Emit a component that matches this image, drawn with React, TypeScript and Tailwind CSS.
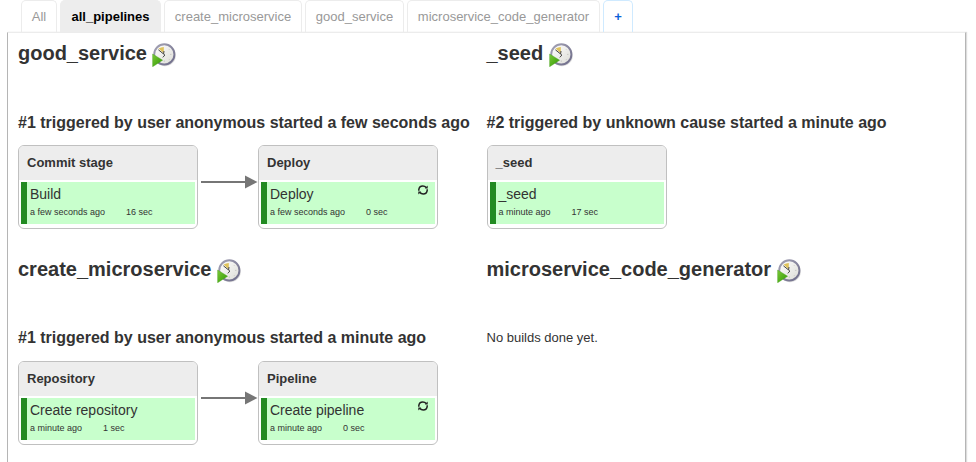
import React from "react";

type Task = { stage: string; name: string; when: string; took: string; rerun?: boolean };
type Pipeline = { title: string; run?: string; stages: Task[] };

const rows: Pipeline[][] = [
  [
    {
      title: "good_service",
      run: "#1 triggered by user anonymous started a few seconds ago",
      stages: [
        { stage: "Commit stage", name: "Build", when: "a few seconds ago", took: "16 sec" },
        { stage: "Deploy", name: "Deploy", when: "a few seconds ago", took: "0 sec", rerun: true },
      ],
    },
    {
      title: "_seed",
      run: "#2 triggered by unknown cause started a minute ago",
      stages: [{ stage: "_seed", name: "_seed", when: "a minute ago", took: "17 sec" }],
    },
  ],
  [
    {
      title: "create_microservice",
      run: "#1 triggered by user anonymous started a minute ago",
      stages: [
        { stage: "Repository", name: "Create repository", when: "a minute ago", took: "1 sec" },
        { stage: "Pipeline", name: "Create pipeline", when: "a minute ago", took: "0 sec", rerun: true },
      ],
    },
    { title: "microservice_code_generator", stages: [] },
  ],
];

const tabs = [
  { label: "All", width: "w-9" },
  { label: "all_pipelines", width: "w-[101px]", active: true },
  { label: "create_microservice", width: "w-[138px]" },
  { label: "good_service", width: "w-[99px]" },
  { label: "microservice_code_generator", width: "w-[193px]" },
  { label: "+", width: "w-[30px]", add: true },
];

function ClockIcon() {
  return (
    <svg className="mt-px size-6 shrink-0" viewBox="0 0 24 24">
      <defs>
        <linearGradient id="rim" x1="0" y1="0" x2="1" y2="1">
          <stop offset="0" stopColor="#a5a4b6" />
          <stop offset="1" stopColor="#6c6a88" />
        </linearGradient>
        <linearGradient id="face" x1="0" y1="0" x2="1" y2="1">
          <stop offset="0" stopColor="#ffffff" />
          <stop offset="1" stopColor="#dcdcd6" />
        </linearGradient>
        <linearGradient id="play" x1="0" y1="0" x2="1" y2="1">
          <stop offset="0" stopColor="#7cc83a" />
          <stop offset="1" stopColor="#2f9900" />
        </linearGradient>
      </defs>
      <circle cx="13" cy="12.4" r="10.8" fill="#000" opacity=".14" />
      <circle cx="12.3" cy="11.4" r="10.1" fill="url(#face)" stroke="url(#rim)" strokeWidth="1.9" />
      <path d="M11.8 10.4 6.6 5.6Q9 4 11.8 4Z" fill="#dfc35c" />
      <path d="M6.4 6.8 11.6 11M12 8 11.6 11 12.9 12 10.8 14.4" fill="none" stroke="#484848" strokeWidth="1" />
      <path d="M19.4 11.4h-1.2M17.4 6.3l-.6.6M17.4 16.6l-.6-.6M12.3 18.7v-1.2" stroke="#b3b3ae" strokeWidth=".7" />
      <path d="M.6 11V23.8L10.6 17.2Z" fill="url(#play)" stroke="#45a01c" strokeWidth=".4" />
    </svg>
  );
}

function RerunIcon() {
  return (
    <svg className="ml-auto mr-[6px] mt-[2px] h-3 w-3 shrink-0" viewBox="0 0 12 12" fill="none">
      <path d="M1.8 6.7V5.6Q2.2 2 5.8 2 7.8 2 9.4 3.6M10.2 5.3V6.4Q9.8 10 6.2 10 4.2 10 2.6 8.4" stroke="#222" strokeWidth="1.5" />
      <path d="M7.9 4.4H10.7V1.6ZM4.1 7.6H1.3V10.4Z" fill="#222" />
    </svg>
  );
}

function Arrow() {
  return (
    <svg className="mt-[30px] h-[14px] w-[60px] shrink-0" viewBox="0 0 60 14">
      <path d="M3 6H48V8H3Z" fill="#767676" />
      <path d="M47 .5 59.5 7 47 13.5Z" fill="#767676" />
    </svg>
  );
}

function StageCard({ task }: { task: Task }) {
  return (
    <div className="h-[84px] w-[180px] shrink-0 overflow-hidden rounded-[6px] border border-[#c0c0c0] bg-white">
      <div className="h-[34px] bg-[#ededed] pl-2 text-[13px] leading-[33px] font-bold">{task.stage}</div>
      <div className="mx-[2px] mt-[2px] flex h-[42px] border-l-[6px] border-[#228b22] bg-[#c8ffcc]">
        <div className="pl-[3px]">
          <div className="h-[22px] text-[14px] leading-6 whitespace-nowrap">{task.name}</div>
          <div className="flex gap-[21px] text-[9px] leading-4 whitespace-nowrap">
            <span>{task.when}</span>
            <span>{task.took}</span>
          </div>
        </div>
        {task.rerun && <RerunIcon />}
      </div>
    </div>
  );
}

function PipelineView({ pipeline, first }: { pipeline: Pipeline; first: boolean }) {
  return (
    <section className="h-[216px] w-[468.5px] shrink-0">
      <div className="flex h-[52px] items-start pt-[9px]">
        <h1 className="mr-[5.5px] text-[20px] leading-[22px] font-bold whitespace-nowrap">{pipeline.title}</h1>
        <ClockIcon />
      </div>
      {pipeline.run ? (
        <h2
          className={`text-[16px] leading-5 font-bold whitespace-nowrap ${
            first ? "mt-[28px] h-[32px]" : "mt-[27px] h-[33px]"
          }`}
        >
          {pipeline.run}
        </h2>
      ) : (
        <p className="mt-[27px] text-[13px] leading-5">No builds done yet.</p>
      )}
      <div className="flex">
        {pipeline.stages.map((task, index) => (
          <React.Fragment key={task.stage}>
            {index > 0 && <Arrow />}
            <StageCard task={task} />
          </React.Fragment>
        ))}
      </div>
    </section>
  );
}

export default function App() {
  return (
    <div className="h-[462px] w-[976px] overflow-hidden bg-white font-['Liberation_Sans',Arial,sans-serif] text-[#333]">
      <nav className="ml-[21px] flex h-8 gap-[3px] text-[13px]">
        {tabs.map((tab) => (
          <div
            key={tab.label}
            className={`flex h-8 shrink-0 justify-center rounded-t-[5px] border border-b-0 leading-[31px] ${tab.width} ${
              tab.active
                ? "border-[#ededed] bg-[#ededed] font-bold text-black"
                : tab.add
                  ? "border-[#cfeaff] font-bold text-[#0b61d8]"
                  : "border-[#ececec] text-[#999]"
            }`}
          >
            {tab.label}
          </div>
        ))}
      </nav>
      <main className="ml-[7px] h-[430px] w-[959px] border-x border-t border-x-[#b5b5b5] border-t-[#ececec] pl-[10px] shadow-[1px_0_1px_#ddd]">
        {rows.map((row, rowIndex) => (
          <div key={row[0].title} className="flex">
            {row.map((pipeline) => (
              <PipelineView key={pipeline.title} pipeline={pipeline} first={rowIndex === 0} />
            ))}
          </div>
        ))}
      </main>
    </div>
  );
}
